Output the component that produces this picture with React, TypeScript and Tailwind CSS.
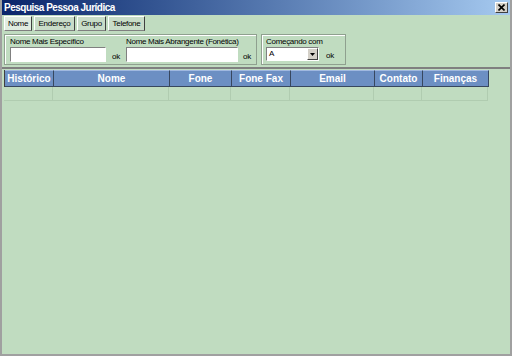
import React from 'react'

const columns = [
  { label: 'Histórico', w: 'w-[49px]' },
  { label: 'Nome', w: 'w-[116px]' },
  { label: 'Fone', w: 'w-[62px]' },
  { label: 'Fone Fax', w: 'w-[59px]' },
  { label: 'Email', w: 'w-[84px]' },
  { label: 'Contato', w: 'w-[48px]' },
  { label: 'Finanças', w: 'w-[66px]' },
]

const tabs = [
  { label: 'Nome', w: 'w-[28px]' },
  { label: 'Endereço', w: 'w-[41px]' },
  { label: 'Grupo', w: 'w-[29px]' },
  { label: 'Telefone', w: 'w-[37px]' },
]

export default function App() {
  return (
    <div className="w-[512px] h-[356px] bg-[#c0dcc0] flex flex-col border-l-2 border-r-2 border-b-2 border-[#a0a0a0] font-['Liberation_Sans',sans-serif] text-[8px] tracking-[-0.3px] text-black overflow-hidden">
      {/* Title bar */}
      <div className="h-[15px] shrink-0 flex items-center justify-between bg-gradient-to-r from-[#0a246a] to-[#a6caf0] pl-[2px] pr-[2px]">
        <span className="text-white font-bold text-[10px] tracking-[-0.5px] leading-none">Pesquisa Pessoa Jurídica</span>
        <button className="w-[13px] h-[11px] bg-[#d4d0c8] border border-t-white border-l-white border-r-[#404040] border-b-[#404040] flex items-center justify-center">
          <svg width="7" height="7" viewBox="0 0 7 7">
            <path d="M0.5 0.5 L6.5 6.5 M6.5 0.5 L0.5 6.5" stroke="black" strokeWidth="1.6" />
          </svg>
        </button>
      </div>

      {/* Tabs */}
      <div className="flex gap-[2px] pl-[2px] pt-[1px] h-[16px] shrink-0">
        {tabs.map((t, i) => (
          <div
            key={t.label}
            className={
              t.w + ' h-[15px] flex items-center justify-center border border-t-white border-l-white border-r-[#404040] border-b-[#808080] ' +
              (i === 0 ? 'bg-[#e0ece0]' : 'bg-[#c8dcc8]')
            }
          >
            {t.label}
          </div>
        ))}
      </div>

      {/* Search groups */}
      <div className="flex gap-[4px] pl-[2px] pt-[3px] h-[34px] shrink-0">
        <div className="w-[253px] h-[31px] border border-[#8fa08f] shadow-[inset_1px_1px_0_white] flex pl-[5px] pt-[2px]">
          <div className="w-[116px] flex flex-col">
            <span className="leading-[10px] whitespace-nowrap">Nome Mais Específico</span>
            <div className="flex items-end gap-[6px]">
              <div className="w-[96px] h-[15px] bg-white border border-t-[#808080] border-l-[#808080] border-r-white border-b-white" />
              <span className="leading-[10px]">ok</span>
            </div>
          </div>
          <div className="flex flex-col">
            <span className="leading-[10px] whitespace-nowrap">Nome Mais Abrangente (Fonética)</span>
            <div className="flex items-end gap-[5px]">
              <div className="w-[112px] h-[15px] bg-white border border-t-[#808080] border-l-[#808080] border-r-white border-b-white" />
              <span className="leading-[10px]">ok</span>
            </div>
          </div>
        </div>
        <div className="w-[85px] h-[31px] border border-[#8fa08f] shadow-[inset_1px_1px_0_white] flex flex-col pl-[4px] pt-[2px]">
          <span className="leading-[10px] whitespace-nowrap">Começando com</span>
          <div className="flex items-end gap-[7px]">
            <div className="w-[53px] h-[14px] bg-white border border-t-[#808080] border-l-[#808080] border-r-white border-b-white flex items-center justify-between pl-[2px]">
              <span className="leading-none">A</span>
              <div className="w-[11px] h-[12px] bg-[#d4d0c8] border border-t-white border-l-white border-r-[#404040] border-b-[#404040] flex items-center justify-center">
                <svg width="5" height="3" viewBox="0 0 5 3">
                  <path d="M0 0 H5 L2.5 3 Z" fill="black" />
                </svg>
              </div>
            </div>
            <span className="leading-[10px]">ok</span>
          </div>
        </div>
      </div>

      {/* Grid */}
      <div className="flex-1 mt-[2px] border-t-2 border-[#808080] pl-[2px] pt-[1px]">
        <div className="flex h-[17px] border-l border-[#404040] tracking-normal">
          {columns.map(c => (
            <div
              key={c.label}
              className={c.w + ' h-full bg-[#6c8fc3] border-r border-b border-[#37475f] border-t border-t-[#a0b8e0] flex items-center justify-center text-white font-bold text-[10px]'}
            >
              {c.label}
            </div>
          ))}
        </div>
        <div className="flex h-[14px]">
          {columns.map(c => (
            <div key={c.label} className={c.w + ' h-full border-r border-b border-[#b0ccb0]'} />
          ))}
        </div>
      </div>
    </div>
  )
}
